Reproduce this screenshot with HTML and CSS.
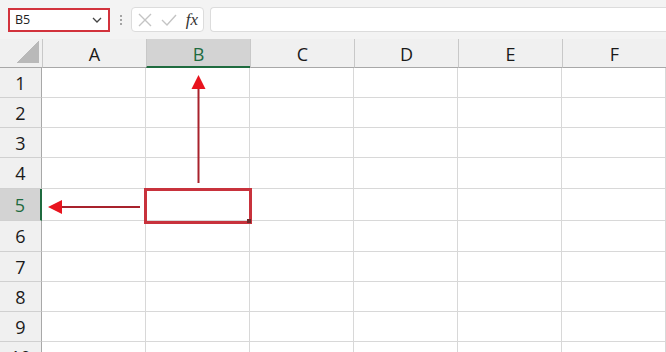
FILE: index.html
```html
<!DOCTYPE html>
<html lang="pt-BR">
<head>
  <meta charset="UTF-8" />
  <title>Planilha</title>
  <link rel="stylesheet" href="styles.css">
</head>
<body>

  <div class="barra">
    <div class="caixa-nome">
      <span>B5</span>
      <svg class="seta-baixo" width="10" height="6" viewBox="0 0 10 6"><path d="M1 1 L5 5 L9 1" fill="none" stroke="#444" stroke-width="1.3"/></svg>
    </div>
    <div class="pontos"><i></i><i></i><i></i></div>
    <div class="botoes">
      <svg width="14" height="14" viewBox="0 0 14 14"><path d="M1 1 L13 13 M13 1 L1 13" stroke="#c4c4c4" stroke-width="1.4"/></svg>
      <svg width="16" height="14" viewBox="0 0 16 14"><path d="M1 7 L6 12 L15 2" fill="none" stroke="#c4c4c4" stroke-width="1.4"/></svg>
      <span class="fx">fx</span>
    </div>
    <div class="formula"></div>
  </div>

  <div class="planilha">
    <div class="cabecalho canto"><div class="triangulo"></div></div>
    <div class="cabecalho col">A</div>
    <div class="cabecalho col ativo-col">B</div>
    <div class="cabecalho col">C</div>
    <div class="cabecalho col">D</div>
    <div class="cabecalho col">E</div>
    <div class="cabecalho col ultima">F</div>
  </div>

  <div class="planilha linhas" id="linhas"></div>

  <svg class="anotacao" width="666" height="352" viewBox="0 0 666 352">
    <rect x="145.5" y="189.5" width="105" height="33" fill="none" stroke="#c8323c" stroke-width="3"/>
    <rect x="247" y="219" width="4" height="4" fill="#6b2a2a"/>
    <line x1="198.5" y1="183" x2="198.5" y2="86" stroke="#a8222c" stroke-width="2"/>
    <path d="M198.5 75 L205.5 89 L191.5 89 Z" fill="#e8141e"/>
    <line x1="140" y1="207" x2="58" y2="207" stroke="#a8222c" stroke-width="2"/>
    <path d="M48 207 L62 200 L62 214 Z" fill="#e8141e"/>
  </svg>

  <script>
  const alturas = [30, 30, 30, 31, 32, 31, 30, 30, 30, 30];
  const linhas = document.getElementById("linhas");

  alturas.forEach((altura, i) => {
    const n = i + 1;
    const cabeca = document.createElement("div");
    cabeca.className = "cabecalho lin" + (n === 5 ? " ativo-lin" : "");
    cabeca.textContent = n;
    cabeca.style.height = altura + "px";
    linhas.appendChild(cabeca);

    for (let c = 0; c < 6; c++) {
      const celula = document.createElement("div");
      celula.className = "celula";
      celula.style.height = altura + "px";
      linhas.appendChild(celula);
    }
  });
</script>

</body>
</html>
```

FILE: styles.css
```css
body {
  font-family: "Open Sans", "Liberation Sans", sans-serif;
  margin: 0;
  width: 666px;
  height: 352px;
  overflow: hidden;
  background-color: #f3f3f3;
  position: relative;
}

.barra {
  height: 39px;
  display: flex;
  align-items: center;
  padding-left: 8px;
  box-sizing: border-box;
}

.caixa-nome {
  width: 102px;
  height: 24px;
  box-sizing: border-box;
  border: 2.5px solid #d2323c;
  background-color: white;
  display: flex;
  align-items: center;
  justify-content: space-between;
  padding: 0 6px 0 5px;
  font-size: 12.5px;
  color: #222;
}

.pontos {
  width: 21px;
  display: flex;
  flex-direction: column;
  align-items: center;
  gap: 2px;
}

.pontos i {
  width: 2px;
  height: 2px;
  background-color: #8a8a8a;
  border-radius: 50%;
}

.botoes {
  width: 73px;
  height: 25px;
  box-sizing: border-box;
  background-color: white;
  border: 1px solid #dcdcdc;
  border-radius: 4px;
  display: flex;
  align-items: center;
  justify-content: space-between;
  padding: 0 5px 0 6px;
}

.fx {
  font-family: "Liberation Serif", serif;
  font-style: italic;
  font-size: 17px;
  color: #333;
}

.formula {
  flex: 1;
  height: 25px;
  margin-left: 6px;
  box-sizing: border-box;
  background-color: white;
  border: 1px solid #dcdcdc;
  border-right: none;
  border-radius: 4px 0 0 4px;
}

.planilha {
  display: grid;
  grid-template-columns: 42px repeat(6, 104px);
}

.cabecalho {
  background-color: #f0f0f0;
  color: #1a1a1a;
  font-size: 18px;
  display: flex;
  align-items: center;
  justify-content: center;
  box-sizing: border-box;
}

.col {
  height: 29px;
  border-left: 1px solid #c8c8c8;
  border-bottom: 1px solid #a8a8a8;
  padding-top: 2px;
}

.canto {
  height: 29px;
  border-bottom: 1px solid #a8a8a8;
  position: relative;
}

.triangulo {
  position: absolute;
  right: 3px;
  bottom: 4px;
  width: 22px;
  height: 22px;
  background: linear-gradient(to bottom right, transparent 50%, #b9b9b9 50%);
}

.ativo-col {
  background-color: #d3d3d3;
  color: #1f6b3f;
  border-bottom: 2px solid #1f6b3f;
}

.lin {
  border-right: 1px solid #a8a8a8;
  border-bottom: 1px solid #d0d0d0;
}

.ativo-lin {
  background-color: #d3d3d3;
  color: #1f6b3f;
  border-right: 2px solid #1f6b3f;
}

.celula {
  background-color: white;
  box-sizing: border-box;
  border-right: 1px solid #d8d8d8;
  border-bottom: 1px solid #d8d8d8;
}

.anotacao {
  position: absolute;
  left: 0;
  top: 0;
}
```
